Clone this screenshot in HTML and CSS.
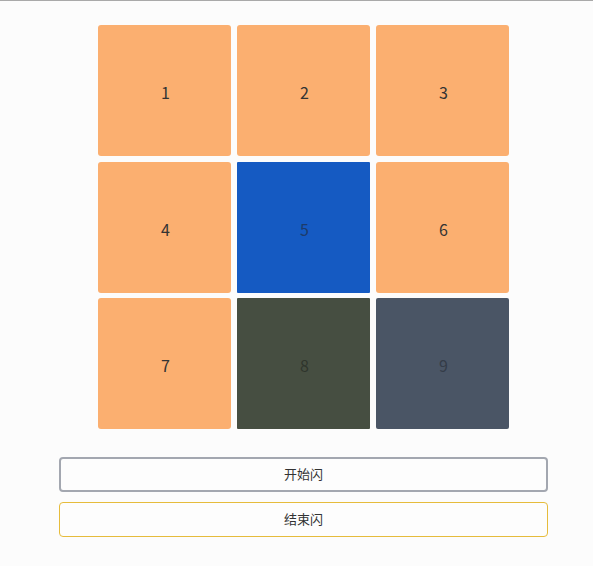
FILE: index.html
```html
<!DOCTYPE html>
<html>
<head>
<meta charset="utf-8">
<link rel="stylesheet" href="styles.css">
</head>
<body>
<div class="page">
  <div class="grid">
    <div class="tile orange">1</div>
    <div class="tile orange">2</div>
    <div class="tile orange">3</div>
    <div class="tile orange">4</div>
    <div class="tile blue">5</div>
    <div class="tile orange">6</div>
    <div class="tile orange">7</div>
    <div class="tile olive">8</div>
    <div class="tile slate">9</div>
  </div>
  <div class="actions">
    <button class="btn btn-start">开始闪</button>
    <button class="btn btn-stop">结束闪</button>
  </div>
</div>
</body>
</html>
```
FILE: styles.css
```css
html, body {
  margin: 0;
  padding: 0;
  background: #fcfcfc;
}
body {
  border-top: 1px solid #a9a9a9;
  font-family: "Noto Sans CJK SC", "Open Sans", sans-serif;
  color: #333;
}
.page {
  width: 489px;
  margin-left: 59px;
  padding-top: 24px;
}
.grid {
  width: 411px;
  margin: 0 auto;
  display: grid;
  grid-template-columns: repeat(3, 133px);
  grid-auto-rows: 131px;
  column-gap: 6px;
  row-gap: 5.5px;
}
.tile {
  display: flex;
  align-items: center;
  justify-content: center;
  font-size: 16px;
  padding-top: 3px;
  padding-left: 2px;
  box-sizing: border-box;
  color: #333;
  border-radius: 3px;
}
.orange { background: #fbaf70; }
.blue { background: #155ac2; border-radius: 1px; color: #1d3b6a; }
.olive { background: #464e41; border-radius: 1px; color: #2f352c; }
.slate { background: #4a5565; border-radius: 2px; color: #343c48; }
.actions {
  margin-top: 27.5px;
  display: flex;
  flex-direction: column;
  gap: 10px;
}
.btn {
  height: 35px;
  width: 100%;
  background: #fdfdfd;
  font-family: "Noto Sans CJK SC", "Open Sans", sans-serif;
  font-size: 13px;
  color: #333;
  border-radius: 4px;
  padding: 0 0 1px 0;
}
.btn-start { border: 2px solid #a3a7b0; }
.btn-stop { border: 1px solid #e6bc3c; }
```
